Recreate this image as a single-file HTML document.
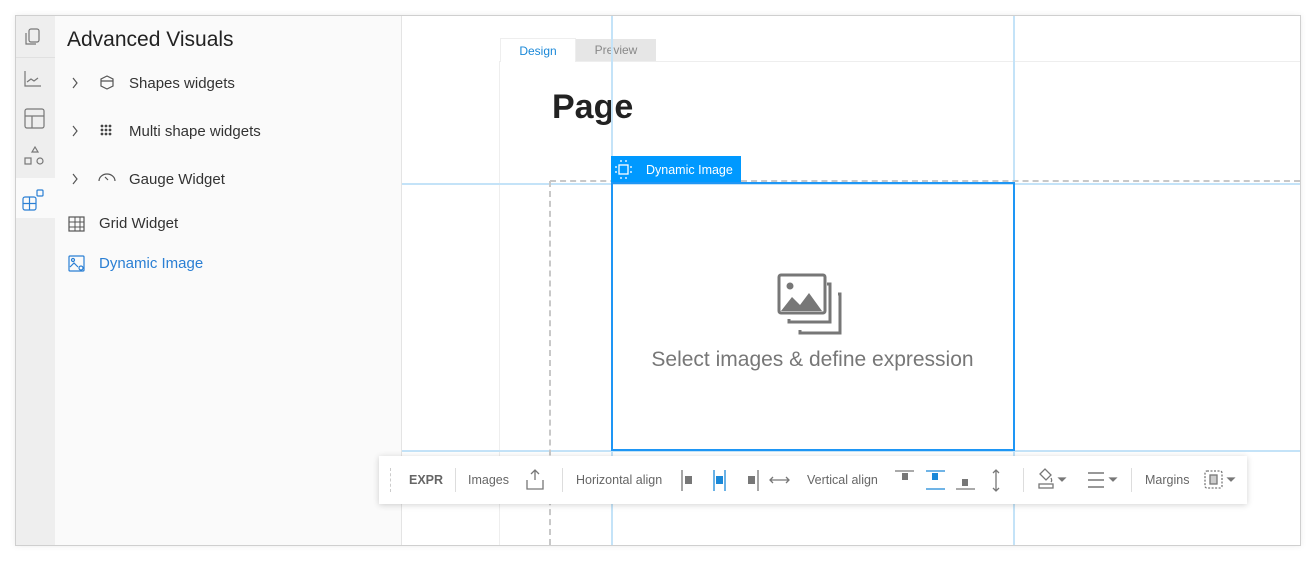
<!DOCTYPE html>
<html><head><style>
*{margin:0;padding:0;box-sizing:border-box}
body{width:1316px;height:561px;background:#fff;position:relative;overflow:hidden;font-family:"Liberation Sans",sans-serif}
.a{position:absolute}
.frame{left:15px;top:15px;width:1286px;height:531px;border:1px solid #cfcfcf;box-shadow:0 0 6px rgba(0,0,0,.08);background:#fff}
.rail{left:16px;top:16px;width:39px;height:529px;background:#eeeeee}
.panel{left:55px;top:16px;width:347px;height:529px;background:#fafafa;border-right:1px solid #e4e4e4}
.it{font-size:15px;color:#333}
.tb{font-size:12.5px;color:#666}
.sep{width:1px;height:24px;background:#ddd;top:468px}
</style></head><body>
<div class="a frame"></div>
<div class="a rail"></div>
<div class="a" style="left:16px;top:57px;width:39px;height:1px;background:#e0e0e0"></div>
<div class="a" style="left:16px;top:178px;width:39px;height:40px;background:#fafafa"></div>
<svg class="a" style="left:16px;top:16px" width="39" height="210" fill="none" stroke="#777" stroke-width="1.2">
<rect x="13" y="13" width="10" height="13" rx="2"/><path d="M10 17v11h10"/>
<path d="M9 55v15h16M11 66l4-3 3 2 4-3"/>
<rect x="9" y="93" width="19" height="19" rx="2"/><path d="M9 100h19M16 100v12"/>
<path d="M16 136l3-5 3 5z"/><rect x="9" y="142" width="6" height="6"/><circle cx="24" cy="145" r="3"/>
<g stroke="#2a7fd4"><rect x="7" y="181" width="13" height="13" rx="2"/><path d="M7 187.5h13M13.5 181v13"/><rect x="21" y="174" width="6" height="6" rx="1"/></g>
</svg>
<div class="a panel"></div>
<div class="a" style="left:67px;top:28px;font-size:21px;color:#222">Advanced Visuals</div>
<svg class="a" style="left:60px;top:60px" width="100" height="220" fill="none" stroke="#555" stroke-width="1.2">
<path d="M13 18l4 5-4 5M13 66l4 5-4 5M13 114l4 5-4 5"/>
<path d="M47 16l6 3v7l-6 3-6-3v-7zM41 21h12"/>
<g fill="#444" stroke="none"><circle cx="42" cy="66" r="1.4"/><circle cx="46" cy="66" r="1.4"/><circle cx="50" cy="66" r="1.4"/><circle cx="42" cy="70" r="1.4"/><circle cx="46" cy="70" r="1.4"/><circle cx="50" cy="70" r="1.4"/><circle cx="42" cy="74" r="1.4"/><circle cx="46" cy="74" r="1.4"/><circle cx="50" cy="74" r="1.4"/></g>
<path d="M39 121a8 7 0 0 1 16 0M45 117l3 3"/>
<rect x="9" y="157" width="15" height="14"/><path d="M9 162h15M9 167h15M15 157v14M20 157v14" stroke-width="1"/>
<g stroke="#2a7fd4"><rect x="9" y="196" width="15" height="15" rx="1"/><circle cx="13" cy="200" r="1.5"/><circle cx="21" cy="208" r="2"/><path d="M10 207l4-4 4 4"/></g>
</svg>
<div class="a it" style="left:129px;top:75px">Shapes widgets</div>
<div class="a it" style="left:129px;top:123px">Multi shape widgets</div>
<div class="a it" style="left:129px;top:171px">Gauge Widget</div>
<div class="a it" style="left:99px;top:215px">Grid Widget</div>
<div class="a it" style="left:99px;top:255px;color:#2a7fd4">Dynamic Image</div>

<!-- canvas -->
<div class="a" style="left:499px;top:61px;width:801px;height:484px;border-left:1px solid #eee;border-top:1px solid #eee"></div>
<div class="a" style="left:500px;top:38px;width:76px;height:24px;background:#fff;border:1px solid #eee;border-bottom:none;font-size:12px;color:#1a88d8;text-align:center;line-height:24px">Design</div>
<div class="a" style="left:576px;top:39px;width:80px;height:22px;background:#e6e6e6;font-size:12px;color:#888;text-align:center;line-height:23px">Preview</div>
<div class="a" style="left:552px;top:88px;font-size:34px;font-weight:bold;color:#222">Page</div>
<div class="a" style="left:402px;top:183px;width:898px;height:2px;background:#c4e3f8"></div>
<div class="a" style="left:402px;top:450px;width:898px;height:2px;background:#c4e3f8"></div>
<div class="a" style="left:611px;top:16px;width:2px;height:529px;background:#c4e3f8"></div>
<div class="a" style="left:1013px;top:16px;width:2px;height:529px;background:#c4e3f8"></div>
<div class="a" style="left:550px;top:180px;width:750px;border-top:2px dashed #c8c8c8"></div>
<div class="a" style="left:549px;top:181px;height:364px;border-left:2px dashed #c8c8c8"></div>
<div class="a" style="left:611px;top:182px;width:404px;height:269px;border:2px solid #1e96f5"></div>
<div class="a" style="left:611px;top:156px;width:130px;height:26px;background:#0099ff;color:#fff;font-size:12.5px;line-height:28px;padding-left:35px">Dynamic Image</div>
<svg class="a" style="left:613px;top:159px" width="22" height="22" fill="none" stroke="#fff" stroke-width="1.3"><rect x="6" y="6" width="9" height="9"/><path d="M3 7v2M3 12v2M18 7v2M18 12v2M7 2h2M12 2h2M7 19h2M12 19h2"/></svg>
<svg class="a" style="left:776px;top:272px" width="74" height="64" fill="none" stroke="#777" stroke-width="3">
<rect x="3" y="3" width="46" height="38" rx="2"/><circle cx="14" cy="14" r="3.5" fill="#777" stroke="none"/><path d="M5 39l11-14 8 8 9-12 13 18z" fill="#777" stroke="none"/><path d="M51 12h3v38H13v-3M62 22h2v39H24v-3"/>
</svg>
<div class="a" style="left:612px;top:348px;width:401px;text-align:center;font-size:21px;color:#777">Select images &amp; define expression</div>

<!-- toolbar -->
<div class="a" style="left:379px;top:456px;width:868px;height:48px;background:#fff;box-shadow:0 1px 6px rgba(0,0,0,.18)"></div>
<div class="a" style="left:390px;top:468px;height:24px;border-left:1px dashed #ccc"></div>
<div class="a tb" style="left:409px;top:473px;font-weight:bold;color:#666">EXPR</div>
<div class="a sep" style="left:455px"></div>
<div class="a tb" style="left:468px;top:473px">Images</div>
<div class="a sep" style="left:562px"></div>
<div class="a tb" style="left:576px;top:473px">Horizontal align</div>
<div class="a tb" style="left:807px;top:473px">Vertical align</div>
<div class="a sep" style="left:1023px"></div>
<div class="a sep" style="left:1131px"></div>
<div class="a tb" style="left:1145px;top:473px">Margins</div>
<svg class="a" style="left:520px;top:464px" width="720" height="32" fill="none" stroke="#777" stroke-width="1.3">
<path d="M15 6v10M11 10l4-4 4 4M7 16v9h16v-9"/>
<path d="M162 6v21M238 6v21" /><rect x="165" y="12" width="7" height="8" fill="#777" stroke="none"/>
<path d="M194 6v21M205 6v21" stroke="#1a88d8"/><rect x="196" y="12" width="7" height="8" fill="#1a88d8" stroke="none"/>
<rect x="228" y="12" width="7" height="8" fill="#777" stroke="none"/>
<path d="M250 16h19M253 13l-3 3 3 3M266 13l3 3-3 3"/>
<path d="M375 7h19"/><rect x="382" y="9" width="6" height="7" fill="#777" stroke="none"/>
<path d="M406 7h19" stroke="#1a88d8"/><rect x="412" y="9" width="6" height="7" fill="#1a88d8" stroke="none"/><path d="M406 25h19" stroke="#1a88d8"/>
<rect x="442" y="15" width="6" height="7" fill="#777" stroke="none"/><path d="M436 25h19"/>
<path d="M476 6v21M473 9l3-3 3 3M473 24l3 3 3-3"/>
<path d="M520 10l5-5 6 6-5 5zM531 14c1 2 1 3 0 4"/><rect x="519" y="20" width="14" height="4"/>
<path d="M539 14h6l-3 3z" fill="#777"/>
<path d="M568 9h16M568 16h16M568 23h16" stroke-width="1.5"/><path d="M590 14h6l-3 3z" fill="#777"/>
<rect x="685" y="7" width="17" height="17" rx="2" stroke-dasharray="2 1.5"/><rect x="690" y="11" width="7" height="9" fill="#ccc"/>
<path d="M708 14h6l-3 3z" fill="#777"/>
</svg>
</body></html>
